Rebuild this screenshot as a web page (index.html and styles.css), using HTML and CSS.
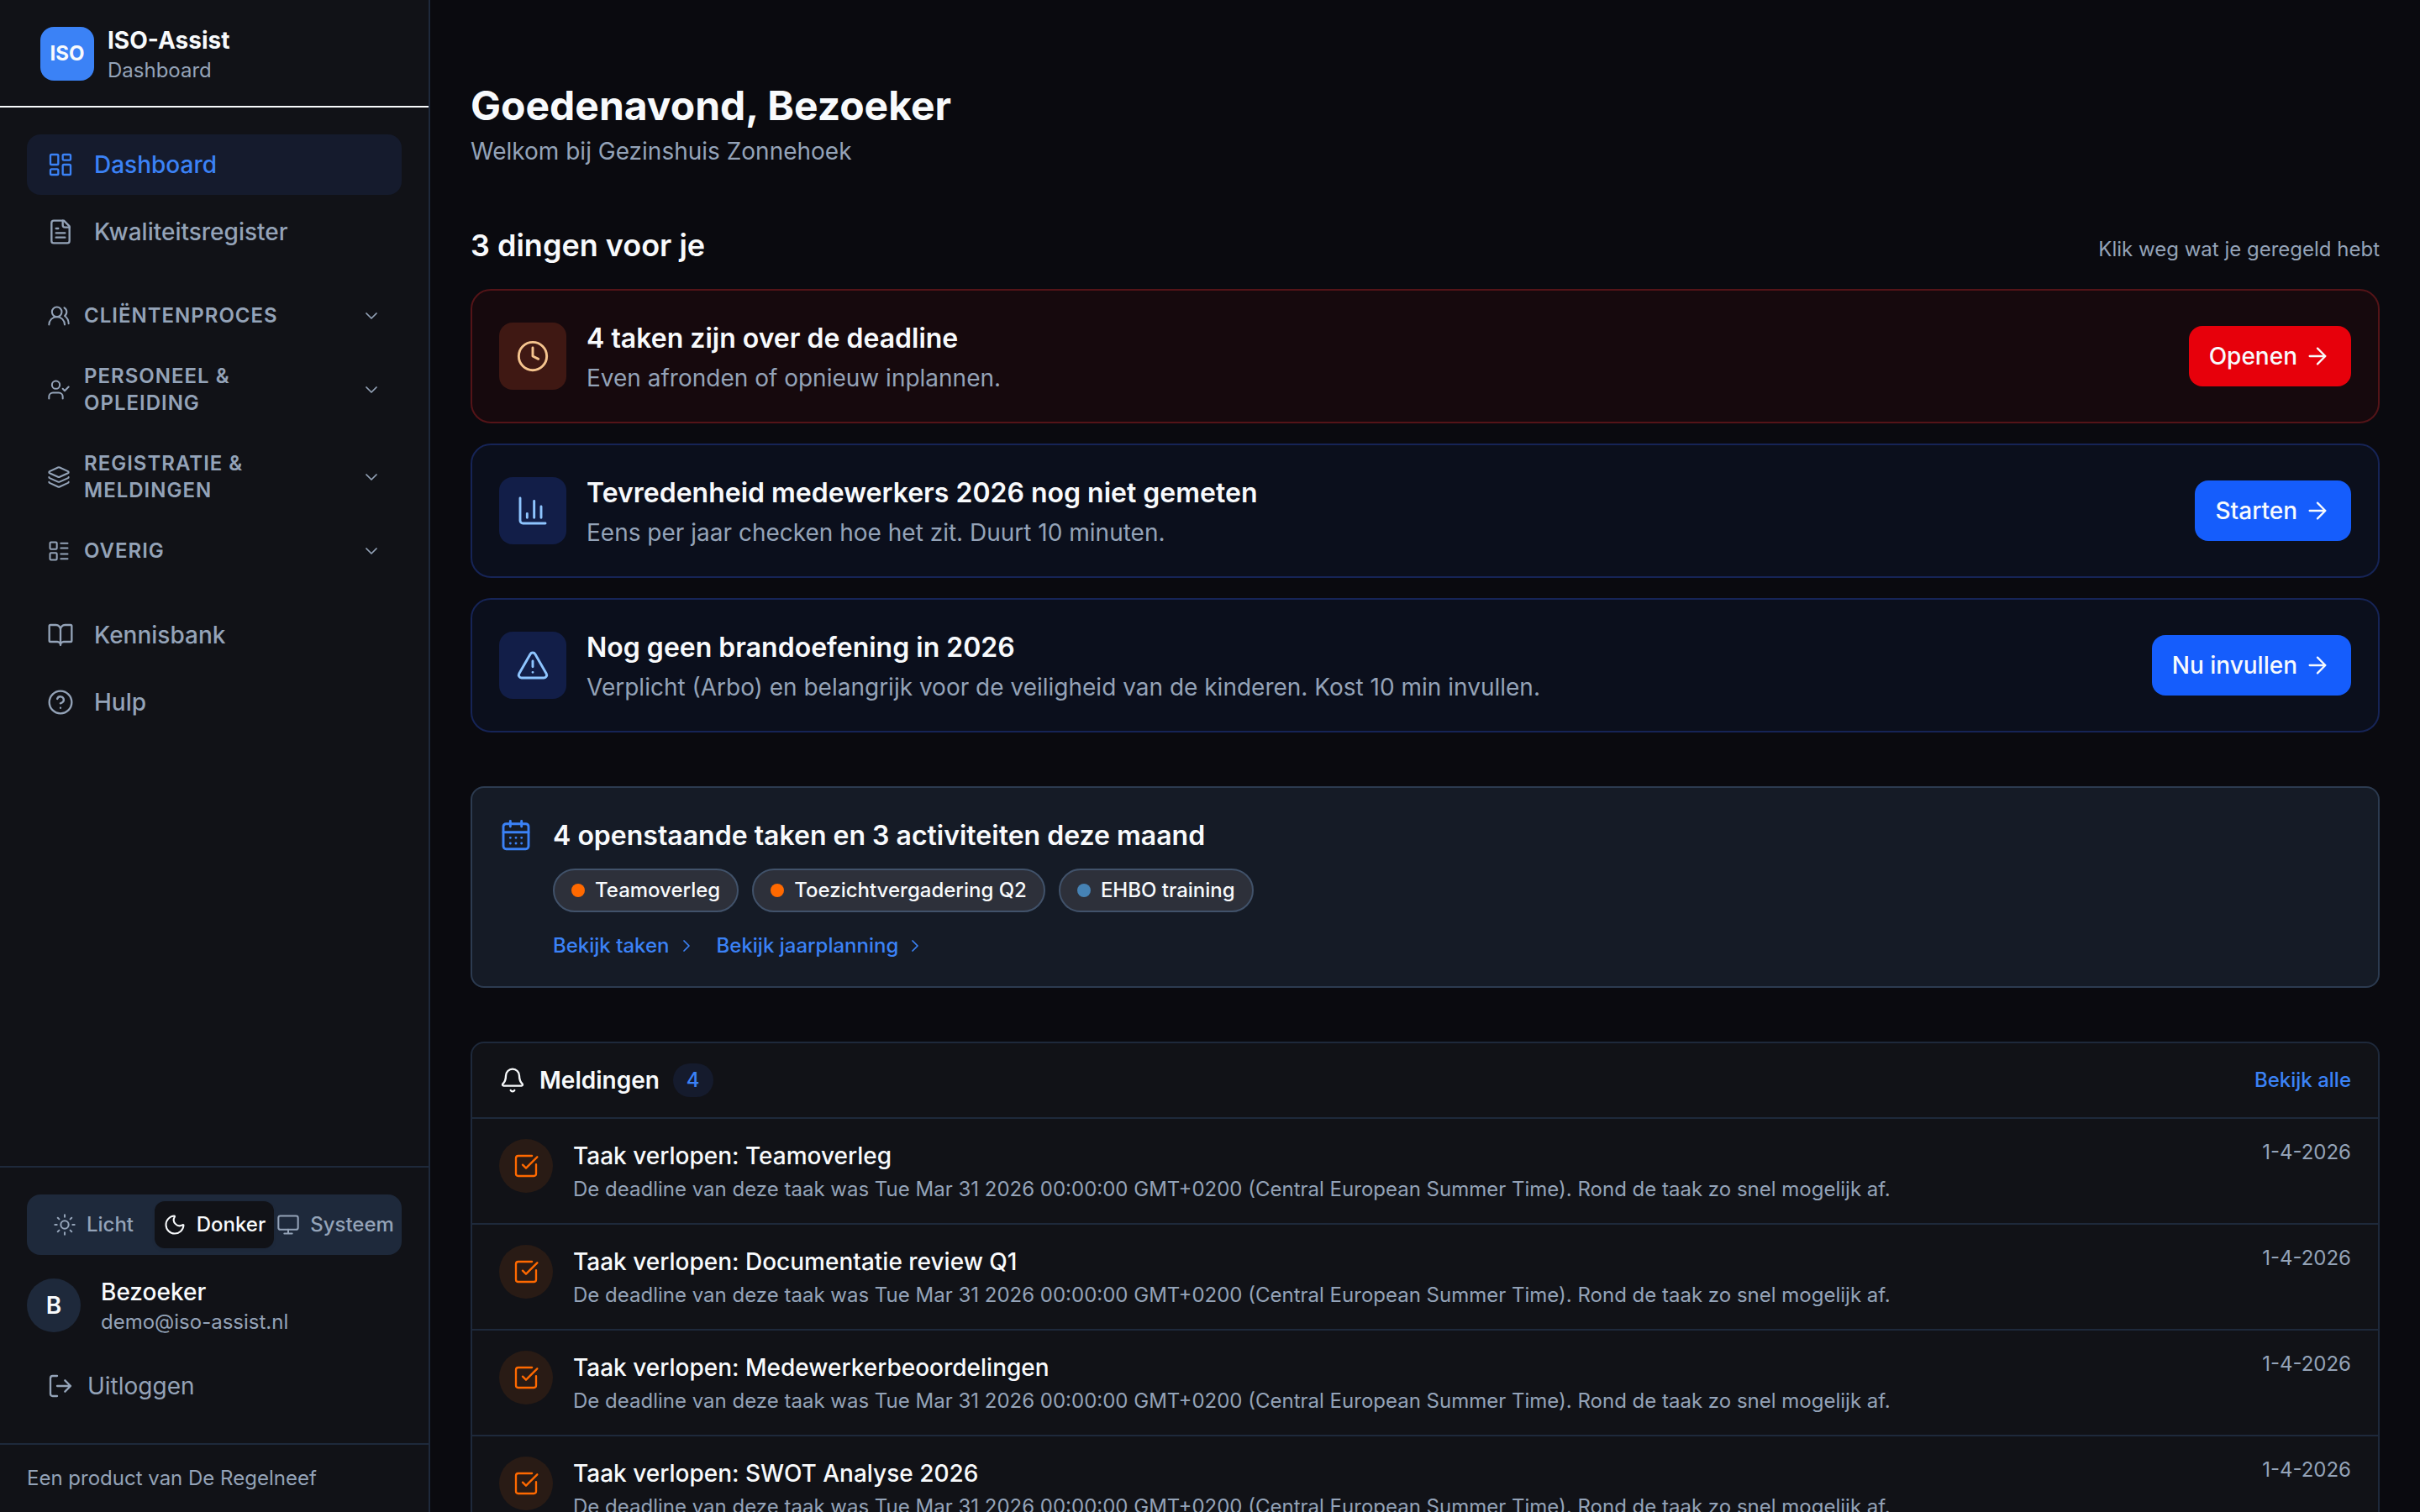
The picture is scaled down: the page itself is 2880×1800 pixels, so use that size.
FILE: index.html
```
<!DOCTYPE html>
<html lang="nl">

<head>
	<meta charset="UTF-8">
	<meta name="viewport" content="width=device-width, initial-scale=1">
	<title>ISO-Assist - Dashboard</title>
	<link rel="stylesheet" href="styles.css">
</head>

<body>
	<!-- icons -->
	<svg class="sprite" aria-hidden="true">
		<symbol id="dashboard" viewBox="0 0 24 24"><rect x="3" y="3" width="7" height="9" rx="1"/><rect x="14" y="3" width="7" height="5" rx="1"/><rect x="14" y="12" width="7" height="9" rx="1"/><rect x="3" y="16" width="7" height="5" rx="1"/></symbol>
		<symbol id="file" viewBox="0 0 24 24"><path d="M15 2H6a2 2 0 0 0-2 2v16a2 2 0 0 0 2 2h12a2 2 0 0 0 2-2V7Z"/><path d="M14 2v4a2 2 0 0 0 2 2h4M10 9H8M16 13H8M16 17H8"/></symbol>
		<symbol id="users" viewBox="0 0 24 24"><path d="M18 21a8 8 0 0 0-16 0"/><circle cx="10" cy="8" r="5"/><path d="M22 20c0-3.37-2-6.5-4-8a5 5 0 0 0-.45-8.3"/></symbol>
		<symbol id="user-check" viewBox="0 0 24 24"><path d="m16 11 2 2 4-4M16 21v-2a4 4 0 0 0-4-4H6a4 4 0 0 0-4 4v2"/><circle cx="9" cy="7" r="4"/></symbol>
		<symbol id="layers" viewBox="0 0 24 24"><path d="M12.83 2.18a2 2 0 0 0-1.66 0L2.6 6.08a1 1 0 0 0 0 1.83l8.58 3.91a2 2 0 0 0 1.66 0l8.58-3.9a1 1 0 0 0 0-1.83z"/><path d="M2 12a1 1 0 0 0 .58.91l8.6 3.91a2 2 0 0 0 1.65 0l8.58-3.9A1 1 0 0 0 22 12"/><path d="M2 17a1 1 0 0 0 .58.91l8.6 3.91a2 2 0 0 0 1.65 0l8.58-3.9A1 1 0 0 0 22 17"/></symbol>
		<symbol id="list" viewBox="0 0 24 24"><rect x="3" y="3" width="7" height="7" rx="1"/><rect x="3" y="14" width="7" height="7" rx="1"/><path d="M14 4h7M14 9h7M14 15h7M14 20h7"/></symbol>
		<symbol id="book" viewBox="0 0 24 24"><path d="M12 7v14M3 18a1 1 0 0 1-1-1V4a1 1 0 0 1 1-1h5a4 4 0 0 1 4 4 4 4 0 0 1 4-4h5a1 1 0 0 1 1 1v13a1 1 0 0 1-1 1h-6a3 3 0 0 0-3 3 3 3 0 0 0-3-3z"/></symbol>
		<symbol id="help" viewBox="0 0 24 24"><circle cx="12" cy="12" r="10"/><path d="M9.09 9a3 3 0 0 1 5.83 1c0 2-3 3-3 3M12 17h.01"/></symbol>
		<symbol id="chevron-down" viewBox="0 0 24 24"><path d="m6 9 6 6 6-6"/></symbol>
		<symbol id="chevron-right" viewBox="0 0 24 24"><path d="m9 18 6-6-6-6"/></symbol>
		<symbol id="sun" viewBox="0 0 24 24"><circle cx="12" cy="12" r="4"/><path d="M12 2v2M12 20v2M4.93 4.93l1.41 1.41M17.66 17.66l1.41 1.41M2 12h2M20 12h2M6.34 17.66l-1.41 1.41M19.07 4.93l-1.41 1.41"/></symbol>
		<symbol id="moon" viewBox="0 0 24 24"><path d="M20.985 12.486a9 9 0 1 1-9.473-9.472c.405-.022.617.46.402.803a6 6 0 0 0 8.268 8.268c.344-.215.825-.004.803.401"/></symbol>
		<symbol id="monitor" viewBox="0 0 24 24"><rect x="2" y="3" width="20" height="14" rx="2"/><path d="M8 21h8M12 17v4"/></symbol>
		<symbol id="logout" viewBox="0 0 24 24"><path d="m16 17 5-5-5-5M21 12H9M9 21H5a2 2 0 0 1-2-2V5a2 2 0 0 1 2-2h4"/></symbol>
		<symbol id="clock" viewBox="0 0 24 24"><circle cx="12" cy="12" r="10"/><path d="M12 6v6l4 2"/></symbol>
		<symbol id="chart" viewBox="0 0 24 24"><path d="M3 3v16a2 2 0 0 0 2 2h16M18 17V9M13 17V5M8 17v-3"/></symbol>
		<symbol id="alert" viewBox="0 0 24 24"><path d="m21.73 18-8-14a2 2 0 0 0-3.48 0l-8 14A2 2 0 0 0 4 21h16a2 2 0 0 0 1.73-3M12 9v4M12 17h.01"/></symbol>
		<symbol id="arrow" viewBox="0 0 24 24"><path d="M5 12h14M12 5l7 7-7 7"/></symbol>
		<symbol id="calendar" viewBox="0 0 24 24"><rect x="3" y="4" width="18" height="18" rx="2"/><path d="M8 2v4M16 2v4M3 10h18M8 14h.01M12 14h.01M16 14h.01M8 18h.01M12 18h.01M16 18h.01"/></symbol>
		<symbol id="bell" viewBox="0 0 24 24"><path d="M10.268 21a2 2 0 0 0 3.464 0M3.262 15.326A1 1 0 0 0 4 17h16a1 1 0 0 0 .74-1.673C19.41 13.956 18 12.499 18 8A6 6 0 0 0 6 8c0 4.499-1.411 5.956-2.738 7.326"/></symbol>
		<symbol id="check" viewBox="0 0 24 24"><path d="M21 10.656V19a2 2 0 0 1-2 2H5a2 2 0 0 1-2-2V5a2 2 0 0 1 2-2h12.344M9 11l3 3L22 4"/></symbol>
	</svg>

	<div class="app">
		<aside class="sidebar">
			<div class="brand">
				<div class="logo">ISO</div>
				<div>
					<div class="brand-name">ISO-Assist</div>
					<div class="small">Dashboard</div>
				</div>
			</div>

			<nav class="nav">
				<div class="nav-links">
					<a href="#" class="nav-link active"><svg class="icon"><use href="#dashboard"/></svg>Dashboard</a>
					<a href="#" class="nav-link"><svg class="icon"><use href="#file"/></svg>Kwaliteitsregister</a>
				</div>
				<div class="nav-links">
					<button type="button" class="nav-group"><svg class="icon icon-sm"><use href="#users"/></svg><span>Cliëntenproces</span><svg class="icon icon-xs"><use href="#chevron-down"/></svg></button>
					<button type="button" class="nav-group"><svg class="icon icon-sm"><use href="#user-check"/></svg><span>Personeel &amp; opleiding</span><svg class="icon icon-xs"><use href="#chevron-down"/></svg></button>
					<button type="button" class="nav-group"><svg class="icon icon-sm"><use href="#layers"/></svg><span>Registratie &amp; meldingen</span><svg class="icon icon-xs"><use href="#chevron-down"/></svg></button>
					<button type="button" class="nav-group"><svg class="icon icon-sm"><use href="#list"/></svg><span>Overig</span><svg class="icon icon-xs"><use href="#chevron-down"/></svg></button>
				</div>
				<div class="nav-links">
					<a href="#" class="nav-link"><svg class="icon"><use href="#book"/></svg>Kennisbank</a>
					<a href="#" class="nav-link"><svg class="icon"><use href="#help"/></svg>Hulp</a>
				</div>
			</nav>

			<div class="account">
				<div class="theme">
					<button type="button"><svg class="icon icon-sm"><use href="#sun"/></svg>Licht</button>
					<button type="button" class="active"><svg class="icon icon-sm"><use href="#moon"/></svg>Donker</button>
					<button type="button"><svg class="icon icon-sm"><use href="#monitor"/></svg>Systeem</button>
				</div>
				<div class="user">
					<div class="avatar">B</div>
					<div>
						<div class="user-name">Bezoeker</div>
						<div class="small">demo@iso-assist.nl</div>
					</div>
				</div>
				<button type="button" class="logout"><svg class="icon"><use href="#logout"/></svg>Uitloggen</button>
			</div>

			<div class="credit small">Een product van De Regelneef</div>
		</aside>

		<main class="main">
			<header class="page-header">
				<h1>Goedenavond, Bezoeker</h1>
				<p>Welkom bij Gezinshuis Zonnehoek</p>
			</header>

			<section class="todo">
				<div class="section-title">
					<h2>3 dingen voor je</h2>
					<span class="small">Klik weg wat je geregeld hebt</span>
				</div>
				<div class="todo-card urgent">
					<div class="tile"><svg class="icon icon-lg"><use href="#clock"/></svg></div>
					<div class="todo-text">
						<h3>4 taken zijn over de deadline</h3>
						<p>Even afronden of opnieuw inplannen.</p>
					</div>
					<button type="button" class="btn">Openen<svg class="icon"><use href="#arrow"/></svg></button>
				</div>
				<div class="todo-card">
					<div class="tile"><svg class="icon icon-lg"><use href="#chart"/></svg></div>
					<div class="todo-text">
						<h3>Tevredenheid medewerkers 2026 nog niet gemeten</h3>
						<p>Eens per jaar checken hoe het zit. Duurt 10 minuten.</p>
					</div>
					<button type="button" class="btn">Starten<svg class="icon"><use href="#arrow"/></svg></button>
				</div>
				<div class="todo-card">
					<div class="tile"><svg class="icon icon-lg"><use href="#alert"/></svg></div>
					<div class="todo-text">
						<h3>Nog geen brandoefening in 2026</h3>
						<p>Verplicht (Arbo) en belangrijk voor de veiligheid van de kinderen. Kost 10 min invullen.</p>
					</div>
					<button type="button" class="btn">Nu invullen<svg class="icon"><use href="#arrow"/></svg></button>
				</div>
			</section>

			<section class="month">
				<svg class="icon icon-lg"><use href="#calendar"/></svg>
				<div>
					<h3>4 openstaande taken en 3 activiteiten deze maand</h3>
					<div class="pills">
						<span class="pill">Teamoverleg</span>
						<span class="pill">Toezichtvergadering Q2</span>
						<span class="pill training">EHBO training</span>
					</div>
					<div class="month-links">
						<a href="#">Bekijk taken<svg class="icon icon-xs"><use href="#chevron-right"/></svg></a>
						<a href="#">Bekijk jaarplanning<svg class="icon icon-xs"><use href="#chevron-right"/></svg></a>
					</div>
				</div>
			</section>

			<section class="alerts">
				<div class="alerts-header">
					<svg class="icon"><use href="#bell"/></svg>
					<h2>Meldingen</h2>
					<span class="badge">4</span>
					<a href="#">Bekijk alle</a>
				</div>
				<ul>
					<li>
						<div class="dot"><svg class="icon"><use href="#check"/></svg></div>
						<div class="alert-text">
							<h4>Taak verlopen: Teamoverleg</h4>
							<p class="small">De deadline van deze taak was Tue Mar 31 2026 00:00:00 GMT+0200 (Central European Summer Time). Rond de taak zo snel mogelijk af.</p>
						</div>
						<time class="small" datetime="2026-04-01">1-4-2026</time>
					</li>
					<li>
						<div class="dot"><svg class="icon"><use href="#check"/></svg></div>
						<div class="alert-text">
							<h4>Taak verlopen: Documentatie review Q1</h4>
							<p class="small">De deadline van deze taak was Tue Mar 31 2026 00:00:00 GMT+0200 (Central European Summer Time). Rond de taak zo snel mogelijk af.</p>
						</div>
						<time class="small" datetime="2026-04-01">1-4-2026</time>
					</li>
					<li>
						<div class="dot"><svg class="icon"><use href="#check"/></svg></div>
						<div class="alert-text">
							<h4>Taak verlopen: Medewerkerbeoordelingen</h4>
							<p class="small">De deadline van deze taak was Tue Mar 31 2026 00:00:00 GMT+0200 (Central European Summer Time). Rond de taak zo snel mogelijk af.</p>
						</div>
						<time class="small" datetime="2026-04-01">1-4-2026</time>
					</li>
					<li>
						<div class="dot"><svg class="icon"><use href="#check"/></svg></div>
						<div class="alert-text">
							<h4>Taak verlopen: SWOT Analyse 2026</h4>
							<p class="small">De deadline van deze taak was Tue Mar 31 2026 00:00:00 GMT+0200 (Central European Summer Time). Rond de taak zo snel mogelijk af.</p>
						</div>
						<time class="small" datetime="2026-04-01">1-4-2026</time>
					</li>
				</ul>
			</section>
		</main>
	</div>
</body>

</html>
```
FILE: styles.css
```
* {
	box-sizing: border-box;
	margin: 0;
	padding: 0;
}

body {
	background-color: #0a0a0f;
	color: #f8fafc;
	font-family: Inter, sans-serif;
	font-size: 28px;
	line-height: 40px;
}

button {
	background: none;
	border: none;
	color: inherit;
	cursor: pointer;
	font: inherit;
}

a {
	color: #3b82f6;
	text-decoration: none;
}

ul {
	list-style: none;
}

.sprite {
	display: none;
}

.icon {
	fill: none;
	flex-shrink: 0;
	height: 32px;
	stroke: currentColor;
	stroke-linecap: round;
	stroke-linejoin: round;
	stroke-width: 1.75;
	width: 32px;
}

.icon-xs {
	height: 24px;
	width: 24px;
}

.icon-sm {
	height: 28px;
	width: 28px;
}

.icon-lg {
	height: 40px;
	width: 40px;
}

.small {
	color: #94a3b8;
	font-size: 24px;
	line-height: 32px;
}

.app {
	display: flex;
	height: 100vh;
}

/* Sidebar */
.sidebar {
	background-color: #111217;
	border-right: 2px solid #1e293b;
	display: flex;
	flex-direction: column;
	flex-shrink: 0;
	width: 512px;
}

.brand {
	align-items: center;
	border-bottom: 2px solid #f8fafc;
	display: flex;
	gap: 16px;
	padding: 28px 48px 26px;
}

.logo {
	background-color: #3b82f6;
	border-radius: 16px;
	font-size: 24px;
	font-weight: 700;
	height: 64px;
	line-height: 64px;
	text-align: center;
	width: 64px;
}

.brand-name {
	font-weight: 700;
}

.nav {
	display: flex;
	flex: 1;
	flex-direction: column;
	gap: 32px;
	padding: 32px;
}

.nav-links {
	display: flex;
	flex-direction: column;
	gap: 8px;
}

.nav-link {
	align-items: center;
	border-radius: 16px;
	color: #94a3b8;
	display: flex;
	font-weight: 500;
	gap: 24px;
	padding: 16px 24px;
}

.nav-link.active {
	background-color: #151b2d;
	color: #3b82f6;
}

.nav-group {
	align-items: center;
	color: #94a3b8;
	display: flex;
	font-size: 24px;
	font-weight: 600;
	gap: 16px;
	letter-spacing: 1px;
	line-height: 32px;
	padding: 16px 24px;
	text-align: left;
	text-transform: uppercase;
}

.nav-group span {
	flex: 1;
}

.account {
	border-top: 2px solid #1e293b;
	display: flex;
	flex-direction: column;
	gap: 24px;
	padding: 32px;
}

.theme {
	background-color: #1e293b;
	border-radius: 16px;
	display: grid;
	gap: 2px;
	grid-template-columns: repeat(3, 1fr);
	padding: 8px;
}

.theme button {
	align-items: center;
	border-radius: 12px;
	color: #94a3b8;
	display: flex;
	font-size: 24px;
	font-weight: 500;
	gap: 12px;
	height: 56px;
	justify-content: center;
}

.theme .active {
	background-color: #111217;
	box-shadow: 0 2px 4px rgba(0, 0, 0, 0.05);
	color: #f8fafc;
}

.user {
	align-items: center;
	display: flex;
	gap: 24px;
}

.avatar {
	background-color: #1e293b;
	border-radius: 50%;
	font-weight: 600;
	height: 64px;
	line-height: 64px;
	text-align: center;
	width: 64px;
}

.user-name {
	font-weight: 500;
}

.logout {
	align-items: center;
	color: #94a3b8;
	display: flex;
	gap: 16px;
	padding: 16px 24px;
}

.credit {
	border-top: 2px solid #1e293b;
	padding: 24px 32px;
}

/* Main */
.main {
	display: flex;
	flex: 1;
	flex-direction: column;
	gap: 64px;
	min-width: 0;
	overflow-y: auto;
	padding: 96px 48px;
	scrollbar-width: none;
}

.main > * {
	flex-shrink: 0;
}

.page-header {
	color: #94a3b8;
}

h1 {
	color: #f8fafc;
	font-size: 48px;
	line-height: 60px;
	margin-bottom: 4px;
}

h3 {
	font-size: 32px;
	font-weight: 600;
	line-height: 50px;
}

.todo {
	display: flex;
	flex-direction: column;
	gap: 24px;
}

.section-title {
	align-items: baseline;
	display: flex;
	justify-content: space-between;
}

.section-title h2 {
	font-size: 36px;
	font-weight: 600;
	line-height: 56px;
}

.todo-card {
	align-items: center;
	background-color: #0b0f1c;
	border: 2px solid #162456;
	border-radius: 24px;
	display: flex;
	gap: 24px;
	padding: 32px;
}

.tile {
	background-color: #121e48;
	border-radius: 16px;
	color: #8ec5ff;
	display: flex;
	padding: 20px;
}

.todo-text {
	flex: 1;
}

.todo-text h3 {
	margin-bottom: 2px;
}

.todo-text p {
	color: #94a3b8;
}

.btn {
	align-items: center;
	background-color: #155dfc;
	border-radius: 16px;
	display: flex;
	font-weight: 500;
	gap: 8px;
	padding: 16px 24px;
}

.urgent {
	background-color: #16090d;
	border-color: #541418;
}

.urgent .tile {
	background-color: #3f1813;
	color: #f5c48e;
}

.urgent .btn {
	background-color: #e7000b;
}

.month {
	background-color: #151b26;
	border: 2px solid #2c3b50;
	border-radius: 16px;
	display: flex;
	gap: 24px;
	padding: 32px;
}

.month > .icon {
	color: #3b82f6;
	margin-top: 4px;
}

.pills {
	display: flex;
	gap: 16px;
	margin: 14px 0 24px;
}

.pill {
	align-items: center;
	background-color: #2d303a;
	border: 2px solid #41526a;
	border-radius: 26px;
	display: flex;
	font-size: 24px;
	font-weight: 500;
	gap: 12px;
	line-height: 32px;
	padding: 8px 20px;
}

.pill::before {
	background-color: #ff6900;
	border-radius: 50%;
	content: "";
	height: 16px;
	width: 16px;
}

.training::before {
	background-color: #4682b4;
}

.month-links {
	display: flex;
	gap: 24px;
}

.month-links a {
	align-items: center;
	display: flex;
	font-size: 24px;
	font-weight: 500;
	gap: 8px;
	line-height: 32px;
}

.alerts {
	background-color: #111217;
	border: 2px solid #1e293b;
	border-radius: 16px;
}

.alerts-header {
	align-items: center;
	display: flex;
	gap: 16px;
	padding: 24px 32px;
}

.alerts-header h2 {
	font-size: 28px;
	font-weight: 600;
}

.badge {
	background-color: #151b2d;
	border-radius: 20px;
	color: #3b82f6;
	font-size: 24px;
	font-weight: 500;
	padding: 0 16px;
}

.alerts-header a {
	font-size: 24px;
	font-weight: 500;
	line-height: 32px;
	margin-left: auto;
}

.alerts li {
	border-top: 2px solid #1e293b;
	display: flex;
	gap: 24px;
	padding: 24px 32px;
}

.dot {
	background-color: #291b15;
	border-radius: 50%;
	color: #ff6900;
	display: flex;
	height: 64px;
	padding: 16px;
	width: 64px;
}

.alert-text {
	flex: 1;
}

.alert-text h4 {
	font-size: 28px;
	font-weight: 500;
	margin-bottom: 4px;
}
```
